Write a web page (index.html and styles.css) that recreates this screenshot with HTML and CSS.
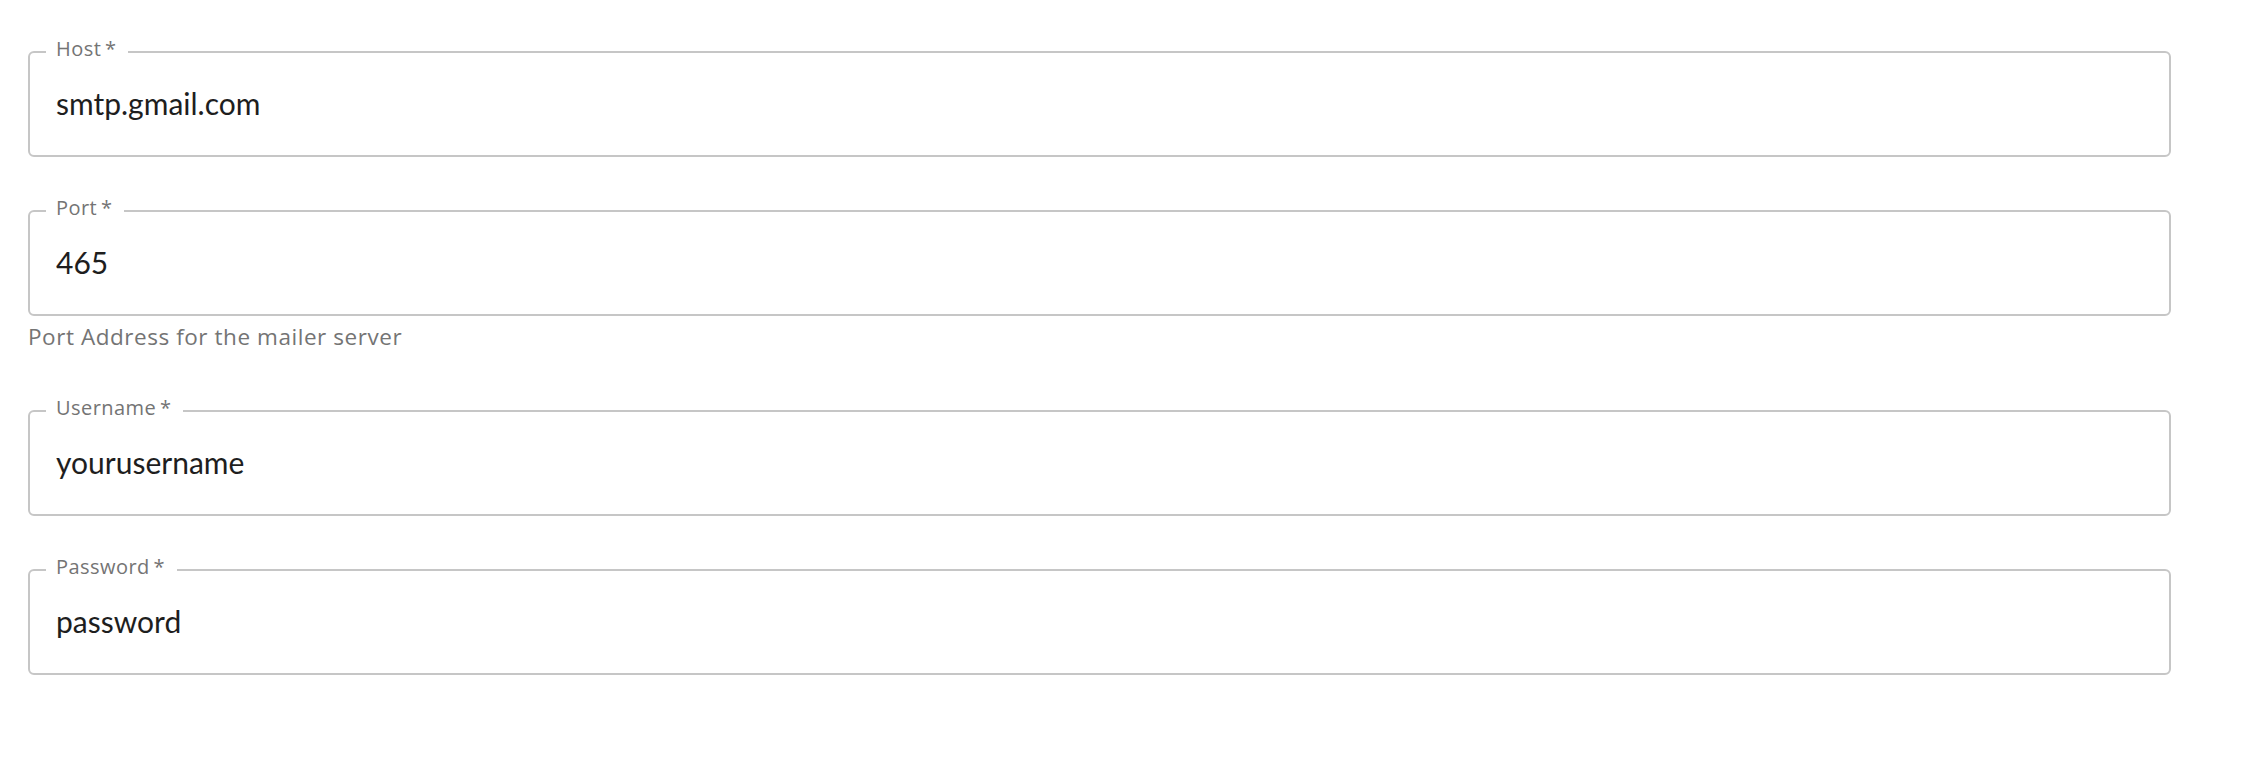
FILE: index.html
```html
<!DOCTYPE html>
<html lang="en">
<head>
<meta charset="utf-8">
<title>Mailer settings</title>
<link rel="stylesheet" href="styles.css">
</head>
<body>
<form class="form">
  <div class="field">
    <fieldset class="outline">
      <legend class="label">Host&#8201;*</legend>
      <input class="input" type="text" value="smtp.gmail.com">
    </fieldset>
  </div>
  <div class="field">
    <fieldset class="outline">
      <legend class="label">Port&#8201;*</legend>
      <input class="input" type="text" value="465">
    </fieldset>
    <p class="helper">Port Address for the mailer server</p>
  </div>
  <div class="field">
    <fieldset class="outline">
      <legend class="label">Username&#8201;*</legend>
      <input class="input" type="text" value="yourusername">
    </fieldset>
  </div>
  <div class="field">
    <fieldset class="outline">
      <legend class="label">Password&#8201;*</legend>
      <input class="input" type="text" value="password">
    </fieldset>
  </div>
</form>
</body>
</html>
```
FILE: styles.css
```css
html, body {
  margin: 0;
  padding: 0;
  background: #ffffff;
}

body {
  font-family: "Lato", "Noto Sans", sans-serif;
}

.form {
  display: flex;
  flex-direction: column;
  gap: 39px;
  width: 2143px;
  padding: 37px 0 0 28px;
}

.field {
  display: flex;
  flex-direction: column;
}

.outline {
  margin: 0;
  padding: 0 0 0 16px;
  border: 2px solid #c6c6c6;
  border-radius: 6px;
  min-width: 0;
}

.label {
  padding: 0 12px 6px 10px;
  font-family: "Open Sans", "Lato", sans-serif;
  font-size: 20px;
  letter-spacing: 0.45px;
  line-height: 24px;
  color: #747474;
}

.input {
  display: block;
  box-sizing: content-box;
  width: calc(100% - 30px);
  height: 36px;
  margin: 0;
  padding: 18px 0 34px 10px;
  border: 0;
  outline: none;
  background: transparent;
  font-family: "Lato", "Noto Sans", sans-serif;
  font-size: 30px;
  line-height: 36px;
  color: #1e1e1e;
}

.helper {
  margin: 5.5px 0 5.5px 0;
  font-family: "Open Sans", "Lato", sans-serif;
  font-size: 22.5px;
  letter-spacing: 0.55px;
  line-height: 30px;
  color: #747474;
}
```
